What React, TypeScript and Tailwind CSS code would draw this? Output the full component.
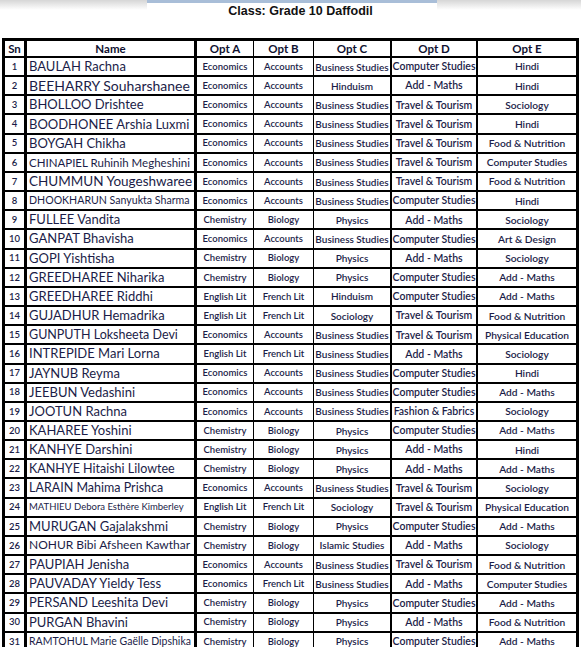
import React from 'react';

interface Student {
  name: string;
  size?: string;
  opts: [string, string, string, string, string];
}

const students: Student[] = [
  { name: 'BAULAH Rachna', opts: ['Economics', 'Accounts', 'Business Studies', 'Computer Studies', 'Hindi'] },
  { name: 'BEEHARRY Souharshanee', size: 'text-[14px]', opts: ['Economics', 'Accounts', 'Hinduism', 'Add - Maths', 'Hindi'] },
  { name: 'BHOLLOO Drishtee', opts: ['Economics', 'Accounts', 'Business Studies', 'Travel & Tourism', 'Sociology'] },
  { name: 'BOODHONEE Arshia Luxmi', opts: ['Economics', 'Accounts', 'Business Studies', 'Travel & Tourism', 'Hindi'] },
  { name: 'BOYGAH Chikha', opts: ['Economics', 'Accounts', 'Business Studies', 'Travel & Tourism', 'Food & Nutrition'] },
  { name: 'CHINAPIEL Ruhinih Megheshini', size: 'text-[11.5px]', opts: ['Economics', 'Accounts', 'Business Studies', 'Travel & Tourism', 'Computer Studies'] },
  { name: 'CHUMMUN Yougeshwaree', size: 'text-[13.5px]', opts: ['Economics', 'Accounts', 'Business Studies', 'Travel & Tourism', 'Food & Nutrition'] },
  { name: 'DHOOKHARUN Sanyukta Sharma', size: 'text-[10.6px]', opts: ['Economics', 'Accounts', 'Business Studies', 'Computer Studies', 'Hindi'] },
  { name: 'FULLEE Vandita', opts: ['Chemistry', 'Biology', 'Physics', 'Add - Maths', 'Sociology'] },
  { name: 'GANPAT Bhavisha', opts: ['Economics', 'Accounts', 'Business Studies', 'Computer Studies', 'Art & Design'] },
  { name: 'GOPI Yishtisha', opts: ['Chemistry', 'Biology', 'Physics', 'Add - Maths', 'Sociology'] },
  { name: 'GREEDHAREE Niharika', opts: ['Chemistry', 'Biology', 'Physics', 'Computer Studies', 'Add - Maths'] },
  { name: 'GREEDHAREE Riddhi', opts: ['English Lit', 'French Lit', 'Hinduism', 'Computer Studies', 'Add - Maths'] },
  { name: 'GUJADHUR Hemadrika', opts: ['English Lit', 'French Lit', 'Sociology', 'Travel & Tourism', 'Food & Nutrition'] },
  { name: 'GUNPUTH Loksheeta Devi', size: 'text-[12.5px]', opts: ['Economics', 'Accounts', 'Business Studies', 'Travel & Tourism', 'Physical Education'] },
  { name: 'INTREPIDE Mari Lorna', opts: ['English Lit', 'French Lit', 'Business Studies', 'Add - Maths', 'Sociology'] },
  { name: 'JAYNUB Reyma', opts: ['Economics', 'Accounts', 'Business Studies', 'Computer Studies', 'Hindi'] },
  { name: 'JEEBUN Vedashini', opts: ['Economics', 'Accounts', 'Business Studies', 'Computer Studies', 'Add - Maths'] },
  { name: 'JOOTUN Rachna', opts: ['Economics', 'Accounts', 'Business Studies', 'Fashion & Fabrics', 'Sociology'] },
  { name: 'KAHAREE Yoshini', opts: ['Chemistry', 'Biology', 'Physics', 'Computer Studies', 'Add - Maths'] },
  { name: 'KANHYE Darshini', opts: ['Chemistry', 'Biology', 'Physics', 'Add - Maths', 'Hindi'] },
  { name: 'KANHYE Hitaishi Lilowtee', size: 'text-[12.5px]', opts: ['Chemistry', 'Biology', 'Physics', 'Add - Maths', 'Add - Maths'] },
  { name: 'LARAIN Mahima Prishca', size: 'text-[12.5px]', opts: ['Economics', 'Accounts', 'Business Studies', 'Travel & Tourism', 'Sociology'] },
  { name: 'MATHIEU Debora Esthère Kimberley', size: 'text-[9.5px]', opts: ['English Lit', 'French Lit', 'Sociology', 'Travel & Tourism', 'Physical Education'] },
  { name: 'MURUGAN Gajalakshmi', opts: ['Chemistry', 'Biology', 'Physics', 'Computer Studies', 'Add - Maths'] },
  { name: 'NOHUR Bibi Afsheen Kawthar', size: 'text-[12px]', opts: ['Chemistry', 'Biology', 'Islamic Studies', 'Add - Maths', 'Sociology'] },
  { name: 'PAUPIAH Jenisha', opts: ['Economics', 'Accounts', 'Business Studies', 'Travel & Tourism', 'Food & Nutrition'] },
  { name: 'PAUVADAY Yieldy Tess', opts: ['Economics', 'French Lit', 'Business Studies', 'Add - Maths', 'Computer Studies'] },
  { name: 'PERSAND Leeshita Devi', opts: ['Chemistry', 'Biology', 'Physics', 'Computer Studies', 'Add - Maths'] },
  { name: 'PURGAN Bhavini', opts: ['Chemistry', 'Biology', 'Physics', 'Add - Maths', 'Food & Nutrition'] },
  { name: 'RAMTOHUL Marie Gaëlle Dipshika', size: 'text-[10.5px]', opts: ['Chemistry', 'Biology', 'Physics', 'Computer Studies', 'Add - Maths'] },
];

// widths + right borders for each column, Sn .. Opt E
const cols = [
  'w-[22px] border-r-[3px]',
  'w-[170px] border-r-[3px]',
  'w-[57px] border-r',
  'w-[60px] border-r',
  'w-[78px] border-r-2',
  'w-[86px] border-r-2',
  'flex-1',
];

const optSize = ['text-[9.5px]', 'text-[9.5px]', 'text-[10px]', 'text-[10.5px]', 'text-[10.2px]'];

const headers = ['Sn', 'Name', 'Opt A', 'Opt B', 'Opt C', 'Opt D', 'Opt E'];

const App: React.FC = () => {
  return (
    <div className="w-[581px] bg-white font-['Lato','Liberation_Sans',sans-serif] text-[#1b1d48]">
      <div className="flex items-start">
        <div className="w-[147px] h-[10px] bg-gradient-to-b from-[#d6d6d6] to-white" />
        <div className="w-[290px]">
          <div className="h-[3px] bg-[#a9bed8]" />
          <div className="pl-[17px] text-center font-['Liberation_Sans',Arial,sans-serif] font-bold text-[12.5px] leading-[15px] text-[#111] mt-[1px]">
            Class: Grade 10 Daffodil
          </div>
        </div>
        <div className="flex-1 h-[10px] bg-gradient-to-b from-[#d6d6d6] to-white" />
      </div>

      <div className="ml-[2px] mt-[19px] w-[577px] border-[3px] border-b-0 border-black">
        <div className="flex h-[17px] border-b-2 border-black">
          {headers.map((h, i) => (
            <div key={h} className={`${cols[i]} flex items-center justify-center border-black font-bold text-[11.5px] leading-none text-[#0f1130]`}>
              {h}
            </div>
          ))}
        </div>

        {students.map((s, idx) => (
          <div key={s.name} className="flex h-[19.17px] border-b-2 border-black">
            <div className={`${cols[0]} flex items-center justify-center border-black font-semibold text-[9.5px] leading-none`}>{idx + 1}</div>
            <div className={`${cols[1]} flex items-center pl-[2px] border-black whitespace-nowrap overflow-hidden leading-none ${s.size ?? 'text-[13px]'}`}>
              {s.name}
            </div>
            {s.opts.map((o, j) => (
              <div key={j} className={`${cols[j + 2]} flex items-center justify-center border-black whitespace-nowrap overflow-hidden leading-none font-semibold ${optSize[j]}`}>
                {o}
              </div>
            ))}
          </div>
        ))}
      </div>
    </div>
  );
};

export default App;
